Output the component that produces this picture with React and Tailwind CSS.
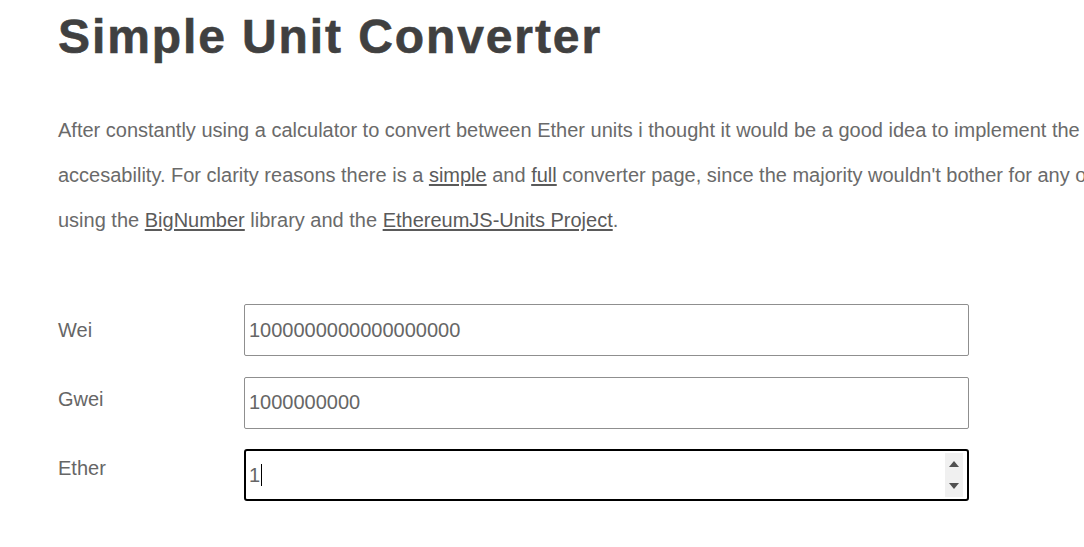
import React from 'react';

const units = [
  { name: 'Wei', value: '1000000000000000000' },
  { name: 'Gwei', value: '1000000000' },
];

function Link({ children }) {
  return <a href="#" className="underline text-[#5a5a5a] underline-offset-2">{children}</a>;
}

export default function App() {
  return (
    <div className="w-full min-h-[547px] overflow-hidden bg-white font-['Liberation_Sans',Arial,sans-serif]">
      <div className="pl-[58px] w-[1600px]">
        {/* heading */}
        <h1 className="pt-[10px] text-[48px] leading-[54px] font-bold tracking-[1.9px] text-[#404040] [-webkit-text-stroke:0.6px_#404040]">
          Simple Unit Converter
        </h1>

        {/* intro text, lines continue past the window */}
        <div className="mt-[44px] text-[20px] leading-[45px] text-[#6a6a6a]">
          <p className="whitespace-nowrap">
            After constantly using a calculator to convert between Ether units i thought it would be a good idea to implement the conversion in a web page for better
          </p>
          <p className="whitespace-nowrap">
            accesability. For clarity reasons there is a <Link>simple</Link> and <Link>full</Link> converter page, since the majority wouldn't bother for any other units than wei, gwei and ether. Calculations are done
          </p>
          <p className="whitespace-nowrap">
            using the <Link>BigNumber</Link> library and the <Link>EthereumJS-Units Project</Link>.
          </p>
        </div>

        {/* converter form */}
        <div className="mt-[52px] flex">
          <div className="w-[186px] flex flex-col text-[20px] text-[#666]">
            <div className="h-[69px] flex items-center">Wei</div>
            <div className="h-[69px] flex items-center">Gwei</div>
            <div className="h-[69px] flex items-center">Ether</div>
          </div>
          <div className="pt-[9px] flex flex-col gap-[20.5px]">
            {units.map((u) => (
              <input
                key={u.name}
                readOnly
                value={u.value}
                className="w-[725px] h-[52px] border border-[#8f8f8f] rounded-[2px] px-[4px] text-[20px] text-[#666] outline-none"
              />
            ))}
            <div className="relative w-[725px] h-[52px] border-2 border-black rounded-[3px] flex items-center pl-[3px] text-[20px] text-[#666]">
              <span>1</span>
              <span className="w-px h-[22px] bg-black ml-px" />
              {/* spinner */}
              <div className="absolute right-[4px] top-[2px] bottom-[2px] w-[18px] bg-[#f0f0f0] flex flex-col items-center justify-around">
                <svg width="10" height="6" viewBox="0 0 10 6"><path d="M5 0 L10 6 L0 6 Z" fill="#505050" /></svg>
                <svg width="10" height="6" viewBox="0 0 10 6"><path d="M0 0 L10 0 L5 6 Z" fill="#505050" /></svg>
              </div>
            </div>
          </div>
        </div>
      </div>
    </div>
  );
}
